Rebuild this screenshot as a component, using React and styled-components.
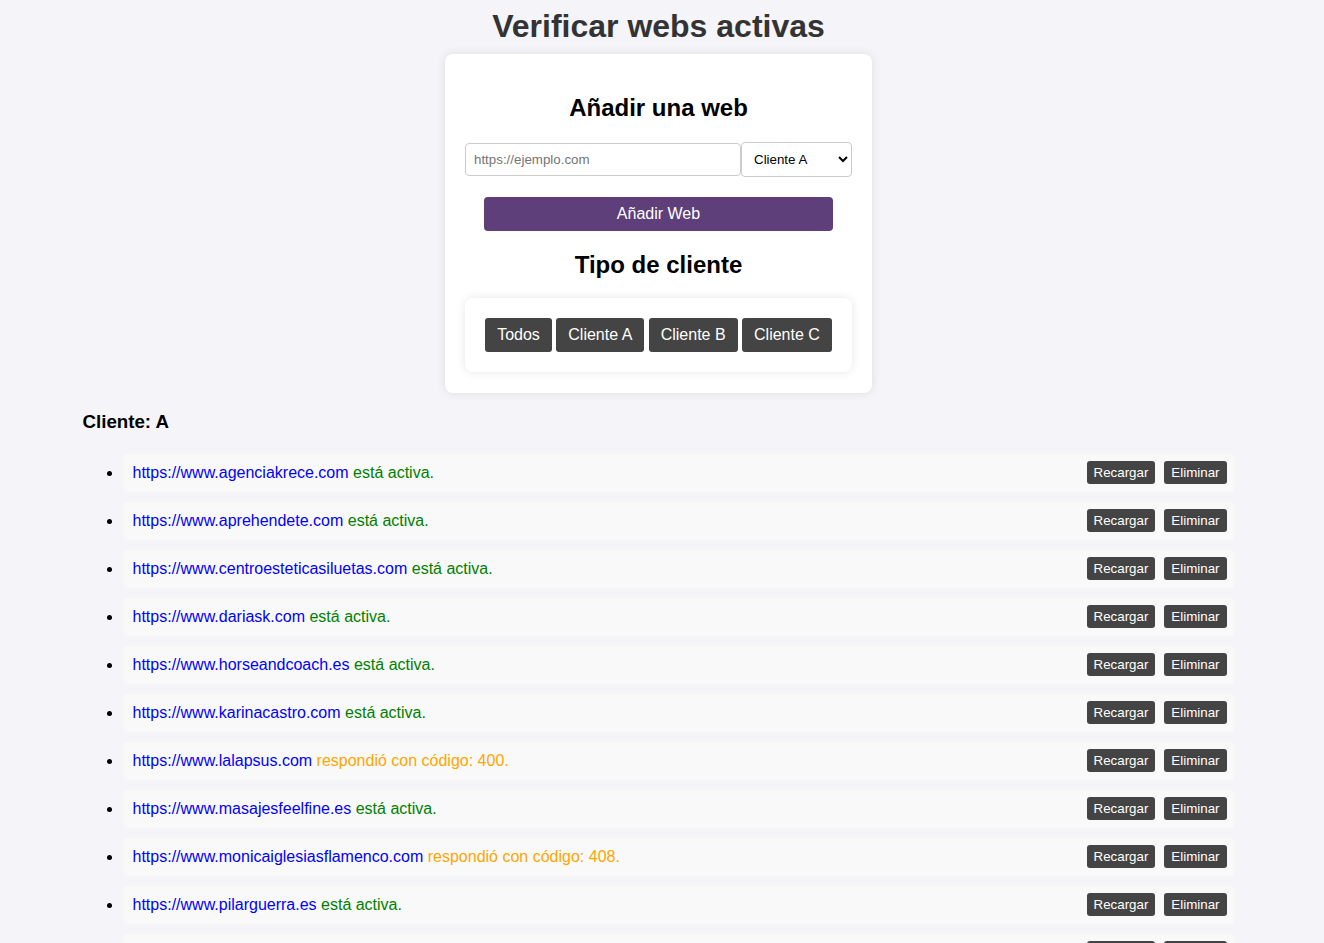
import React from "react";
import styled, { createGlobalStyle } from "styled-components";

const GlobalStyle = createGlobalStyle`
  html, body {
    margin: 0;
    padding: 0;
    background: #f4f4f9;
    font-family: "Liberation Sans", Arial, sans-serif;
  }
  body {
    padding: 8px 7px 0 0;
  }
`;

const Page = styled.div`
  width: 1152px;
  margin: 0 auto;
`;

const Title = styled.h1`
  margin: 0 0 9px;
  text-align: center;
  font-size: 32px;
  font-weight: bold;
  color: #333;
  line-height: 37px;
`;

const Card = styled.div`
  width: 387px;
  margin: 0 auto;
  padding: 20px 20px 21px;
  background: #fff;
  border-radius: 8px;
  box-shadow: 0 0 10px rgba(0, 0, 0, 0.1);
`;

const SectionTitle = styled.h2`
  text-align: center;
  font-size: 24px;
  font-weight: bold;
  color: #000;
  margin: 20px 0;
  line-height: 27.5px;
`;

const InputRow = styled.div`
  display: flex;
  align-items: center;
`;

const UrlInput = styled.input`
  flex: 1;
  min-width: 0;
  height: 33px;
  box-sizing: border-box;
  padding: 8px;
  border: 1px solid #ccc;
  border-radius: 4px;
  font-family: "Liberation Sans", Arial, sans-serif;
  font-size: 13.33px;
  color: #000;
  &::placeholder {
    color: #757575;
  }
`;

const ClientSelect = styled.select`
  width: 111px;
  height: 35px;
  box-sizing: border-box;
  padding: 0 4px 0 8px;
  border: 1px solid #ccc;
  border-radius: 4px;
  background: #fff;
  font-family: "Liberation Sans", Arial, sans-serif;
  font-size: 13.33px;
  color: #000;
`;

const AddButton = styled.button`
  display: block;
  width: 90%;
  margin: 20px auto 0;
  padding: 8px;
  height: 34px;
  border: none;
  border-radius: 4px;
  background: #5e3f7a;
  color: #fff;
  font-family: "Liberation Sans", Arial, sans-serif;
  font-size: 16px;
  cursor: pointer;
`;

const FilterBox = styled.div`
  margin-top: 1px;
  padding: 20px;
  background: #fff;
  border-radius: 8px;
  box-shadow: 0 0 10px rgba(0, 0, 0, 0.1);
  display: flex;
  justify-content: center;
  gap: 4.4px;
`;

const FilterButton = styled.button`
  height: 34px;
  padding: 0 12px;
  border: none;
  border-radius: 3px;
  background: #444;
  color: #fff;
  font-family: "Liberation Sans", Arial, sans-serif;
  font-size: 16px;
  cursor: pointer;
`;

const GroupTitle = styled.h3`
  font-size: 18.72px;
  font-weight: bold;
  color: #000;
  margin: 18px 0 21px;
  line-height: 21.5px;
`;

const List = styled.ul`
  margin: 0;
  padding-left: 40px;
`;

const Row = styled.li`
  list-style: disc;
  background: #f9f9f9;
  border-radius: 5px;
  margin-bottom: 10px;
  padding: 0 8px 0 10px;
  height: 38px;
  box-sizing: border-box;
  font-size: 16px;
  &::marker {
    color: #000;
  }
`;

const RowInner = styled.div`
  height: 100%;
  display: flex;
  align-items: center;
  justify-content: space-between;
`;

const Url = styled.span`
  color: #0000ff;
`;

const Status = styled.span`
  color: ${(p) => (p.$ok ? "#008000" : "#ffa500")};
`;

const Actions = styled.div`
  display: flex;
  gap: 9px;
`;

const SmallButton = styled.button`
  height: 23px;
  padding: 0 7px;
  border: none;
  border-radius: 3px;
  background: #444;
  color: #fff;
  font-family: "Liberation Sans", Arial, sans-serif;
  font-size: 13.33px;
  cursor: pointer;
`;

const sites = [
  ["https://www.agenciakrece.com", null],
  ["https://www.aprehendete.com", null],
  ["https://www.centroesteticasiluetas.com", null],
  ["https://www.dariask.com", null],
  ["https://www.horseandcoach.es", null],
  ["https://www.karinacastro.com", null],
  ["https://www.lalapsus.com", 400],
  ["https://www.masajesfeelfine.es", null],
  ["https://www.monicaiglesiasflamenco.com", 408],
  ["https://www.pilarguerra.es", null],
  ["https://www.psicologiaenmadrid.es", null],
  ["https://www.restauranteelpuerto.com", null],
];

export default function App() {
  return (
    <>
      <GlobalStyle />
      <Page>
        <Title>Verificar webs activas</Title>
        <Card>
          <SectionTitle>Añadir una web</SectionTitle>
          <InputRow>
            <UrlInput placeholder="https://ejemplo.com" />
            <ClientSelect defaultValue="A">
              <option value="A">Cliente A</option>
              <option value="B">Cliente B</option>
              <option value="C">Cliente C</option>
            </ClientSelect>
          </InputRow>
          <AddButton>Añadir Web</AddButton>
          <SectionTitle>Tipo de cliente</SectionTitle>
          <FilterBox>
            <FilterButton>Todos</FilterButton>
            <FilterButton>Cliente A</FilterButton>
            <FilterButton>Cliente B</FilterButton>
            <FilterButton>Cliente C</FilterButton>
          </FilterBox>
        </Card>
        <GroupTitle>Cliente: A</GroupTitle>
        <List>
          {sites.map(([url, code]) => (
            <Row key={url}>
              <RowInner>
                <span>
                  <Url>{url}</Url>{" "}
                  {code ? (
                    <Status>respondió con código: {code}.</Status>
                  ) : (
                    <Status $ok>está activa.</Status>
                  )}
                </span>
                <Actions>
                  <SmallButton>Recargar</SmallButton>
                  <SmallButton>Eliminar</SmallButton>
                </Actions>
              </RowInner>
            </Row>
          ))}
        </List>
      </Page>
    </>
  );
}
